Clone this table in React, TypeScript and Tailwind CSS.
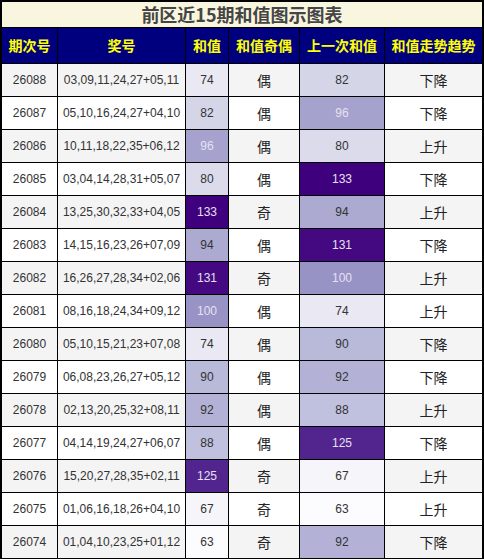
import React from 'react'

type Row = {
    issue: string;
    balls: string;
    sum: number;
    parity: string;
    prev: number;
    trend: string;
};

const rows: Row[] = [
    { issue: '26088', balls: '03,09,11,24,27+05,11', sum: 74, parity: '偶', prev: 82, trend: '下降' },
    { issue: '26087', balls: '05,10,16,24,27+04,10', sum: 82, parity: '偶', prev: 96, trend: '下降' },
    { issue: '26086', balls: '10,11,18,22,35+06,12', sum: 96, parity: '偶', prev: 80, trend: '上升' },
    { issue: '26085', balls: '03,04,14,28,31+05,07', sum: 80, parity: '偶', prev: 133, trend: '下降' },
    { issue: '26084', balls: '13,25,30,32,33+04,05', sum: 133, parity: '奇', prev: 94, trend: '上升' },
    { issue: '26083', balls: '14,15,16,23,26+07,09', sum: 94, parity: '偶', prev: 131, trend: '下降' },
    { issue: '26082', balls: '16,26,27,28,34+02,06', sum: 131, parity: '奇', prev: 100, trend: '上升' },
    { issue: '26081', balls: '08,16,18,24,34+09,12', sum: 100, parity: '偶', prev: 74, trend: '上升' },
    { issue: '26080', balls: '05,10,15,21,23+07,08', sum: 74, parity: '偶', prev: 90, trend: '下降' },
    { issue: '26079', balls: '06,08,23,26,27+05,12', sum: 90, parity: '偶', prev: 92, trend: '下降' },
    { issue: '26078', balls: '02,13,20,25,32+08,11', sum: 92, parity: '偶', prev: 88, trend: '上升' },
    { issue: '26077', balls: '04,14,19,24,27+06,07', sum: 88, parity: '偶', prev: 125, trend: '下降' },
    { issue: '26076', balls: '15,20,27,28,35+02,11', sum: 125, parity: '奇', prev: 67, trend: '上升' },
    { issue: '26075', balls: '01,06,16,18,26+04,10', sum: 67, parity: '奇', prev: 63, trend: '上升' },
    { issue: '26074', balls: '01,04,10,23,25+01,12', sum: 63, parity: '奇', prev: 92, trend: '下降' },
];

// purples ramp, light -> dark
const stops = ['#fcfbfd', '#efedf5', '#dadaeb', '#bcbddc', '#9e9ac8', '#807dba', '#6a51a3', '#54278f', '#3f007d'];

function heat(v: number) {
    const t = Math.min(1, Math.max(0, (v - 63) / (133 - 63)));
    const pos = t * (stops.length - 1);
    const i = Math.min(stops.length - 2, Math.floor(pos));
    const f = pos - i;
    const a = stops[i], b = stops[i + 1];
    const ch = (s: string, k: number) => parseInt(s.slice(1 + k * 2, 3 + k * 2), 16);
    const rgb = [0, 1, 2].map((k) => Math.round(ch(a, k) + (ch(b, k) - ch(a, k)) * f));
    return { bg: `rgb(${rgb.join(',')})`, dark: v >= 96 };
}

const cjk = "font-['Noto_Sans_CJK_SC',sans-serif]";
const num = "font-['Liberation_Sans','DejaVu_Sans',sans-serif] text-[12px]";

function HeatCell({ value }: { value: number }) {
    const c = heat(value);
    return (
        <div
            className={`flex items-center justify-center ${num} ${c.dark ? 'text-[#e6e0f2]' : 'text-[#333333]'}`}
            style={{ backgroundColor: c.bg }}
        >
            {value}
        </div>
    );
}

export default function App() {
    const headers = ['期次号', '奖号', '和值', '和值奇偶', '上一次和值', '和值走势趋势'];

    return (
        <div className="w-[484px] bg-black border-2 border-black grid grid-cols-[55px_127px_42px_70px_84px_97px] gap-px">
            {/* title */}
            <div className={`col-span-6 h-[25px] bg-[#f8f6df] flex items-center justify-center text-[18px] font-bold text-[#454545] ${cjk}`}>
                前区近15期和值图示图表
            </div>

            {headers.map((h) => (
                <div key={h} className={`h-[35px] bg-[#00007f] flex items-center justify-center text-[14px] font-bold text-[#ffff00] ${cjk}`}>
                    {h}
                </div>
            ))}

            {rows.map((r, idx) => {
                const bg = idx % 2 === 0 ? 'bg-[#f4f4f4]' : 'bg-white';
                return (
                    <React.Fragment key={r.issue}>
                        <div className={`h-[32px] ${bg} flex items-center justify-center text-[#333333] ${num}`}>{r.issue}</div>
                        <div className={`${bg} flex items-center justify-center text-[#333333] ${num}`}>{r.balls}</div>
                        <HeatCell value={r.sum} />
                        <div className={`${bg} flex items-center justify-center text-[14px] text-[#222222] ${cjk}`}>{r.parity}</div>
                        <HeatCell value={r.prev} />
                        <div className={`${bg} flex items-center justify-center text-[14px] text-[#222222] ${cjk}`}>{r.trend}</div>
                    </React.Fragment>
                );
            })}
        </div>
    );
}
